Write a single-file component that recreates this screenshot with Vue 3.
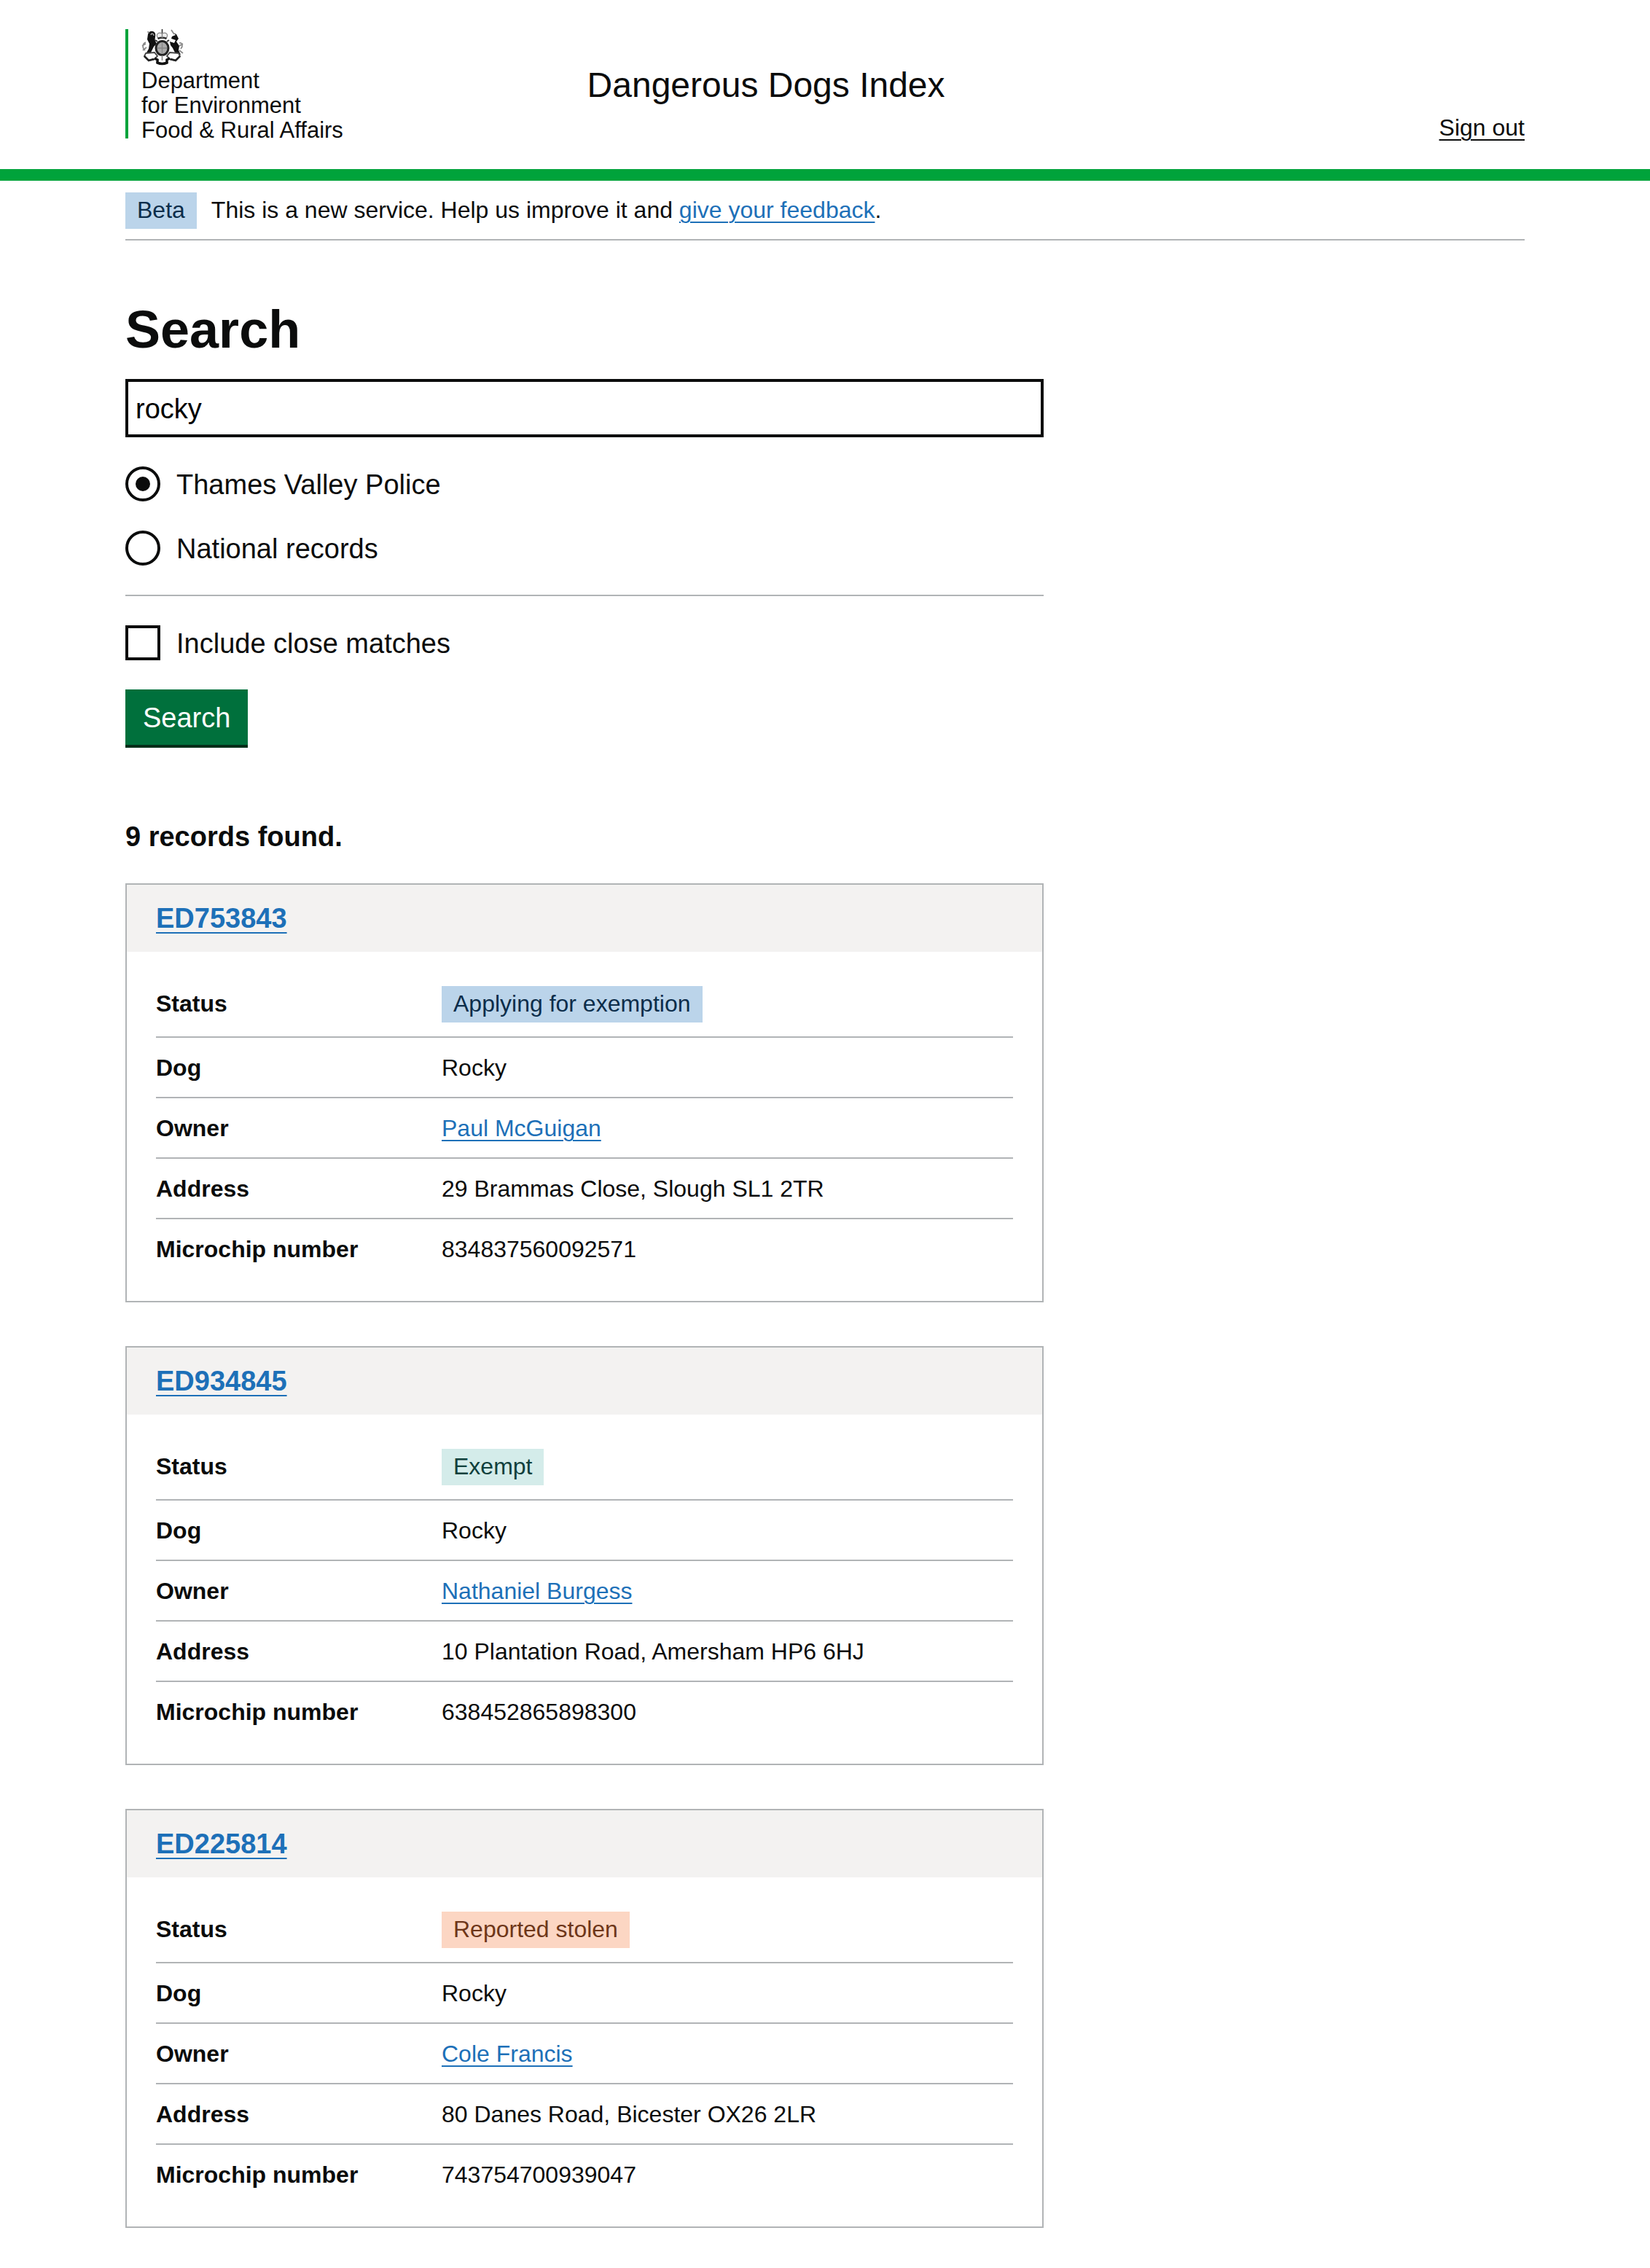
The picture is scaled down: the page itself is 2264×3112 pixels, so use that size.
<script setup>
import { ref } from 'vue'

const query = ref('rocky')
const scope = ref('local')
const closeMatches = ref(false)

const records = [
  {
    index: 'ED753843',
    status: 'Applying for exemption',
    tone: 'blue',
    dog: 'Rocky',
    owner: 'Paul McGuigan',
    address: '29 Brammas Close, Slough SL1 2TR',
    microchip: '834837560092571',
  },
  {
    index: 'ED934845',
    status: 'Exempt',
    tone: 'turquoise',
    dog: 'Rocky',
    owner: 'Nathaniel Burgess',
    address: '10 Plantation Road, Amersham HP6 6HJ',
    microchip: '638452865898300',
  },
  {
    index: 'ED225814',
    status: 'Reported stolen',
    tone: 'orange',
    dog: 'Rocky',
    owner: 'Cole Francis',
    address: '80 Danes Road, Bicester OX26 2LR',
    microchip: '743754700939047',
  },
]
</script>

<template>
  <div class="page">
    <header class="header">
      <div class="container header-row">
        <div class="brand">
          <div class="logo">
            <svg class="crest" viewBox="0 0 58 50" aria-hidden="true">
              <!-- crown -->
              <path d="M28.5 0v7" stroke="#333" stroke-width="1.6" />
              <path d="M22.500 12c-3-5 1-8.500 6-6C33.500 3.500 37.500 7 34.500 12z" fill="#eee" stroke="#888" stroke-width="1.200" />
              <path d="M22.500 13q6-2.500 12 0" fill="none" stroke="#333" stroke-width="2.600" />
              <path d="M28.500 6v6" stroke="#888" stroke-width="1.500" />
              <!-- lion -->
              <path d="M9 7c1-5 8-6 10-1 1 4-1 6 0 10l2 4-4 4-4 8-7 2 4-7 1-7-3-6z" fill="#111" />
              <path d="M13 8c1-3 4-2 4 1" fill="none" stroke="#999" stroke-width="1.600" />
              <path d="M9 3l1 3M6 18c-5 2-5 8-1 11M1 23l5-3M2 29l5-4" fill="none" stroke="#888" stroke-width="1.700" />
              <!-- unicorn -->
              <path d="M44 5l4 2 3 6-3 4 4 6-1 6 3 6-7-1-4-8-3-4-1-5 6 2 2-4-6-2 1-3 5-2z" fill="#111" />
              <path d="M45 7l-4-6M52 19c5-1 5 5 2 8M52 23l5-3M52 29l5 4" fill="none" stroke="#888" stroke-width="1.700" />
              <!-- shield and garter -->
              <ellipse cx="28.500" cy="26" rx="8.500" ry="9.500" fill="#aaa" stroke="#222" stroke-width="3" />
              <path d="M28.500 19v14M22 26h13" stroke="#888" stroke-width="1.400" />
              <path d="M22 17l-3-2M35 17l3-2" stroke="#333" stroke-width="2" />
              <!-- scroll -->
              <path d="M6 33l12-1 4 5-5 5-7 1-6-6zM51 33l-12-1-4 5 5 5 7 1 6-6z" fill="#fff" stroke="#444" stroke-width="1.800" />
              <path d="M4 37l6 6 7-2M53 37l-6 6-7-2" fill="none" stroke="#222" stroke-width="2.600" />
              <path d="M28.500 36v7" stroke="#888" stroke-width="1.600" />
              <path d="M18 40l4 2v4q6.500 3 13 0v-4l4-2" fill="none" stroke="#111" stroke-width="3.600" />
            </svg>
            <span>Department</span>
            <span>for Environment</span>
            <span>Food &amp; Rural Affairs</span>
          </div>
        </div>
        <span class="service-name">Dangerous Dogs Index</span>
        <a class="sign-out" href="#">Sign out</a>
      </div>
    </header>

    <div class="container">
      <div class="phase-banner">
        <strong class="tag blue">Beta</strong>
        <span>This is a new service. Help us improve it and <a href="#">give your feedback</a>.</span>
      </div>

      <main class="main">
        <form @submit.prevent>
          <h1><label for="query">Search</label></h1>
          <input id="query" v-model="query" class="text-input" type="text" />

          <div class="choices">
            <div class="choice">
              <input id="scope-local" v-model="scope" type="radio" name="scope" value="local" />
              <label for="scope-local">Thames Valley Police</label>
            </div>
            <div class="choice">
              <input id="scope-national" v-model="scope" type="radio" name="scope" value="national" />
              <label for="scope-national">National records</label>
            </div>
          </div>

          <hr />

          <div class="choice">
            <input id="close-matches" v-model="closeMatches" type="checkbox" />
            <label for="close-matches">Include close matches</label>
          </div>

          <button class="button" type="submit">Search</button>
        </form>

        <p class="count">9 records found.</p>

        <section v-for="record in records" :key="record.index" class="card">
          <h2><a href="#">{{ record.index }}</a></h2>
          <dl>
            <div class="row">
              <dt>Status</dt>
              <dd><strong class="tag" :class="record.tone">{{ record.status }}</strong></dd>
            </div>
            <div class="row">
              <dt>Dog</dt>
              <dd>{{ record.dog }}</dd>
            </div>
            <div class="row">
              <dt>Owner</dt>
              <dd><a href="#">{{ record.owner }}</a></dd>
            </div>
            <div class="row">
              <dt>Address</dt>
              <dd>{{ record.address }}</dd>
            </div>
            <div class="row">
              <dt>Microchip number</dt>
              <dd>{{ record.microchip }}</dd>
            </div>
          </dl>
        </section>
      </main>
    </div>
  </div>
</template>

<style>
body {
  background: #fff;
}
</style>

<style scoped>
.page {
  font-family: "Helvetica Neue", "Liberation Sans", Arial, sans-serif;
  font-size: 32px;
  line-height: 41px;
  color: #0b0c0c;
}

.container {
  max-width: 1920px;
  margin: 0 auto;
}

a {
  color: #1d70b8;
  text-decoration: underline;
  text-decoration-thickness: 2px;
  text-underline-offset: 5px;
}

.header {
  border-bottom: 16px solid #00a33b;
}

.header-row {
  display: flex;
  align-items: flex-start;
  padding: 40px 0 42px;
}

.brand {
  width: 33%;
}

.logo {
  display: flex;
  flex-direction: column;
  height: 150px;
  padding-left: 18px;
  border-left: 4px solid #00a33b;
  box-sizing: border-box;
  font-size: 31px;
  line-height: 34px;
}

.crest {
  flex: none;
  width: 58px;
  height: 50px;
  margin-bottom: 4px;
}

.service-name {
  flex: 1;
  margin-top: 47px;
  font-size: 48px;
  line-height: 60px;
}

.sign-out {
  align-self: flex-end;
  margin-bottom: -6px;
  color: #0b0c0c;
}

.phase-banner {
  display: flex;
  align-items: baseline;
  gap: 20px;
  padding: 16px 0 14px;
  border-bottom: 2px solid #b1b4b6;
}

.tag {
  display: inline-block;
  padding: 4px 16px 6px;
  font-weight: 400;
  line-height: 40px;
}

.blue {
  background: #bbd4ea;
  color: #0c2d4a;
}

.turquoise {
  background: #d4ecea;
  color: #10403c;
}

.orange {
  background: #fcd6c3;
  color: #6e3619;
}

.main {
  width: calc(100% * 2 / 3 - 20px);
  padding: 82px 0 48px;
}

h1 {
  margin: 0 0 28px;
  font-size: 72px;
  line-height: 80px;
}

.text-input {
  display: block;
  width: 100%;
  height: 80px;
  padding: 12px 10px 10px;
  border: 4px solid #0b0c0c;
  border-radius: 0;
  box-sizing: border-box;
  font: inherit;
  font-size: 38px;
}

.choices {
  display: flex;
  flex-direction: column;
  gap: 40px;
  margin-top: 40px;
}

.choice {
  display: flex;
  align-items: center;
  gap: 22px;
  font-size: 38px;
  line-height: 46px;
}

.choice label {
  padding-top: 2px;
}

.choice input {
  appearance: none;
  display: grid;
  place-content: center;
  flex: none;
  width: 48px;
  height: 48px;
  margin: 0;
  border: 4px solid #0b0c0c;
  box-sizing: border-box;
}

.choice input[type="radio"] {
  border-radius: 50%;
}

.choice input[type="radio"]:checked::before {
  content: "";
  width: 20px;
  height: 20px;
  border-radius: 50%;
  background: #0b0c0c;
}

hr {
  height: 2px;
  margin: 40px 0;
  border: 0;
  background: #b1b4b6;
}

.button {
  display: block;
  height: 76px;
  margin-top: 40px;
  padding: 2px 24px 0;
  border: 0;
  box-shadow: 0 4px 0 #002d18;
  background: #00703c;
  color: #fff;
  font: inherit;
  font-size: 38px;
}

.count {
  margin: 101px 0 39px;
  font-size: 38px;
  font-weight: 700;
  line-height: 50px;
}

.card {
  border: 2px solid #b1b4b6;
}

.card + .card {
  margin-top: 60px;
}

h2 {
  margin: 0;
  padding: 21px 40px;
  background: #f3f2f1;
  font-size: 38px;
  line-height: 50px;
}

h2 a {
  text-underline-offset: 6px;
}

dl {
  margin: 0;
  padding: 26px 40px 31px;
}

.row {
  display: grid;
  grid-template-columns: 1fr 2fr;
  align-items: baseline;
  padding: 21px 0 19px;
  border-bottom: 2px solid #b1b4b6;
}

.row:last-child {
  border-bottom: 0;
}

dt {
  font-weight: 700;
}

dd {
  margin: 0;
}
</style>
